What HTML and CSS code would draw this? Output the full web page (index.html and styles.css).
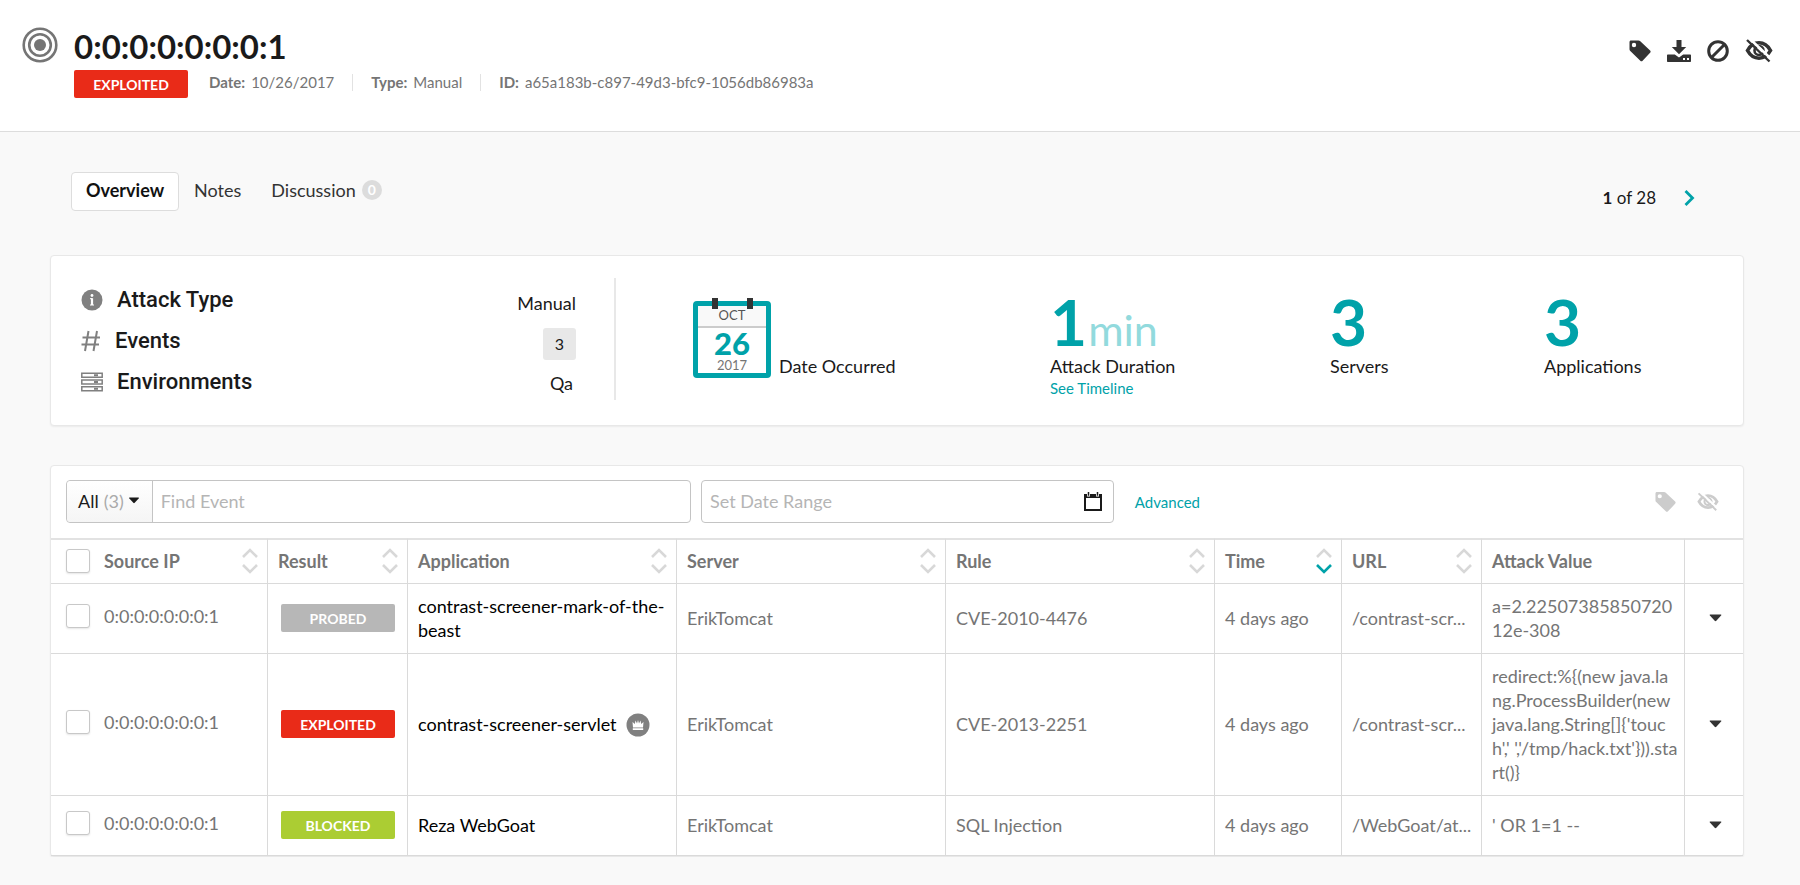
FILE: index.html
```html
<!DOCTYPE html>
<html lang="en">
<head>
<meta charset="utf-8">
<title>Attack 0:0:0:0:0:0:0:1</title>
<link rel="stylesheet" href="styles.css">
</head>
<body>
<svg class="defs" aria-hidden="true">
  <symbol id="tag" viewBox="0 0 22 22"><path fill="currentColor" fill-rule="evenodd" d="M2 .5h7.500c.7 0 1.300.3 1.800.8l9.800 9.200c.7.700.7 1.600 0 2.300l-7.500 8c-.7.700-1.600.700-2.300 0L1.300 11c-.5-.5-.8-1-.8-1.700V2C.5 1.100 1.100.5 2 .5zM5 2.800a2.200 2.200 0 1 0 0 4.400 2.200 2.200 0 0 0 0-4.400z"/></symbol>
  <symbol id="eye-off" viewBox="0 0 28 24">
    <path fill="none" stroke="currentColor" stroke-width="3.600" d="M2.500 11.500C5.500 6 9.500 3.800 14 3.800s8.500 2.200 11.500 7.700C22.500 17 18.500 19.200 14 19.200S5.500 17 2.500 11.500z"/>
    <circle cx="14" cy="11.500" r="4.500" fill="none" stroke="currentColor" stroke-width="2.600"/>
    <path class="eye-gap" stroke-width="2.600" d="M4.500-.5 27 20.800"/>
    <path stroke="currentColor" stroke-width="2.400" d="M2 1 24.500 22.500"/>
  </symbol>
  <symbol id="sort-up" viewBox="0 0 16 10"><path fill="none" stroke="currentColor" stroke-width="2.600" d="M1 9 8 2l7 7"/></symbol>
  <symbol id="sort-down" viewBox="0 0 16 10"><path fill="none" stroke="currentColor" stroke-width="2.600" d="M1 1l7 7 7-7"/></symbol>
  <symbol id="caret" viewBox="0 0 12 8"><path fill="currentColor" d="M.8.5h10.400c.6 0 .8.5.4 1L6.800 6.800c-.5.500-1.100.500-1.600 0L.4 1.500C0 1 .2.5.8.5z"/></symbol>
</svg>

<header class="page-head">
  <svg class="target" viewBox="0 0 36 36" aria-hidden="true"><g fill="none" stroke="currentColor"><circle cx="18" cy="18" r="16.300" stroke-width="2.600"/><circle cx="18" cy="18" r="10.800" stroke-width="2.600"/></g><circle cx="18" cy="18" r="6" fill="currentColor"/></svg>
  <div class="head-main">
    <h1>0:0:0:0:0:0:0:1</h1>
    <div class="meta">
      <span class="badge exploited">EXPLOITED</span>
      <dl>
        <div><dt>Date:</dt><dd>10/26/2017</dd></div>
        <div><dt>Type:</dt><dd>Manual</dd></div>
        <div><dt>ID:</dt><dd>a65a183b-c897-49d3-bfc9-1056db86983a</dd></div>
      </dl>
    </div>
  </div>
  <div class="head-actions">
    <button type="button" aria-label="Tag"><svg width="22" height="22"><use href="#tag"/></svg></button>
    <button type="button" aria-label="Export"><svg width="24" height="22" viewBox="0 0 24 22"><path fill="currentColor" d="M9.500 0h5v7h4.700L12 14.300 4.800 7h4.700z"/><path fill="currentColor" fill-rule="evenodd" d="M1 14.500h6.800l4.200 3 4.200-3H23c.6 0 1 .4 1 1V21c0 .6-.4 1-1 1H1c-.6 0-1-.4-1-1v-5.500c0-.6.400-1 1-1zM16 18v2h2v-2zm4 0v2h2v-2z"/></svg></button>
    <button type="button" aria-label="Suppress"><svg width="22" height="22" viewBox="0 0 22 22"><g fill="none" stroke="currentColor" stroke-width="3"><circle cx="11" cy="11" r="9.300"/><path d="M4.500 17.500l13-13"/></g></svg></button>
    <button type="button" aria-label="Hide"><svg width="28" height="24"><use href="#eye-off"/></svg></button>
  </div>
</header>

<main>
  <div class="tab-row">
    <nav class="tabs">
      <a class="active" href="#overview">Overview</a>
      <a href="#notes">Notes</a>
      <a href="#discussion">Discussion <span class="count">0</span></a>
    </nav>
    <div class="pager">
      <span><b>1</b> of 28</span>
      <button type="button" aria-label="Next"><svg width="12" height="16" viewBox="0 0 12 16"><path fill="none" stroke="currentColor" stroke-width="2.800" d="M1.500 1l7 7-7 7"/></svg></button>
    </div>
  </div>

  <section class="card summary">
    <div class="facts">
      <div class="fact">
        <svg width="22" height="22" viewBox="0 0 22 22"><circle cx="11" cy="11" r="10.500" fill="currentColor"/><circle cx="11" cy="6.500" r="1.400" fill="#fff"/><path stroke="#fff" stroke-width="2.200" d="M11 9.200V16"/><path stroke="#fff" d="M9 9.700h2M9 16h4"/></svg>
        <span class="name">Attack Type</span><span class="value">Manual</span>
      </div>
      <div class="fact">
        <svg width="20" height="22" viewBox="0 0 20 22"><path fill="none" stroke="currentColor" stroke-width="2" d="M7.500 1 4 21M16 1l-3.500 20M1.500 7.500H19M.5 14.500H18"/></svg>
        <span class="name">Events</span><span class="value pill">3</span>
      </div>
      <div class="fact">
        <svg width="22" height="20" viewBox="0 0 22 20"><g fill="none" stroke="currentColor" stroke-width="1.500"><path d="M.8 1.200h20.400v4H.8zM.8 8h20.400v4H.8zM.8 14.800h20.400v4H.8z"/></g><path stroke="currentColor" stroke-width="2" d="M13 3.200h4M13 10h4M13 16.800h4"/></svg>
        <span class="name">Environments</span><span class="value qa">Qa</span>
      </div>
    </div>
    <div class="stats">
      <div class="stat date">
        <div class="calendar"><span class="month">OCT</span><span class="day">26</span><span class="year">2017</span></div>
        <span>Date Occurred</span>
      </div>
      <div class="stat"><div class="figure">1<small>min</small></div><span>Attack Duration</span><a href="#timeline">See Timeline</a></div>
      <div class="stat"><div class="figure">3</div><span>Servers</span></div>
      <div class="stat"><div class="figure">3</div><span>Applications</span></div>
    </div>
  </section>

  <section class="card events">
    <div class="toolbar">
      <div class="search">
        <button type="button">All <span>(3)</span> <svg width="10" height="7"><use href="#caret"/></svg></button>
        <input type="text" placeholder="Find Event" aria-label="Find Event">
      </div>
      <label class="range">
        <input type="text" placeholder="Set Date Range" aria-label="Set Date Range">
        <svg width="18" height="19" viewBox="0 0 18 19"><path fill="none" stroke="currentColor" stroke-width="2" d="M1 3h16v15H1z"/><path fill="currentColor" d="M0 2h18v4H0z"/><path stroke="#fff" stroke-width="3" d="M4.500 0v4.500M13.500 0v4.500"/><path stroke="currentColor" stroke-width="1.500" d="M4.500 0v3.800M13.500 0v3.800"/></svg>
      </label>
      <a href="#advanced">Advanced</a>
      <div class="tools">
        <button type="button" aria-label="Tag selected"><svg width="21" height="22"><use href="#tag"/></svg></button>
        <button type="button" aria-label="Hide selected"><svg width="22" height="20"><use href="#eye-off"/></svg></button>
      </div>
    </div>
    <table>
      <colgroup><col class="c-ip"><col class="c-result"><col><col><col><col class="c-time"><col class="c-url"><col class="c-value"><col class="c-menu"></colgroup>
      <thead>
        <tr>
          <th><div class="th"><label class="pick"><input type="checkbox">Source IP</label><button type="button" class="sort" aria-label="Sort"><svg><use href="#sort-up"/></svg><svg><use href="#sort-down"/></svg></button></div></th>
          <th><div class="th">Result<button type="button" class="sort" aria-label="Sort"><svg><use href="#sort-up"/></svg><svg><use href="#sort-down"/></svg></button></div></th>
          <th><div class="th">Application<button type="button" class="sort" aria-label="Sort"><svg><use href="#sort-up"/></svg><svg><use href="#sort-down"/></svg></button></div></th>
          <th><div class="th">Server<button type="button" class="sort" aria-label="Sort"><svg><use href="#sort-up"/></svg><svg><use href="#sort-down"/></svg></button></div></th>
          <th><div class="th">Rule<button type="button" class="sort" aria-label="Sort"><svg><use href="#sort-up"/></svg><svg><use href="#sort-down"/></svg></button></div></th>
          <th><div class="th">Time<button type="button" class="sort" aria-label="Sort"><svg><use href="#sort-up"/></svg><svg class="on"><use href="#sort-down"/></svg></button></div></th>
          <th><div class="th">URL<button type="button" class="sort" aria-label="Sort"><svg><use href="#sort-up"/></svg><svg><use href="#sort-down"/></svg></button></div></th>
          <th><div class="th">Attack Value</div></th>
          <th></th>
        </tr>
      </thead>
      <tbody>
        <tr>
          <td><label class="pick"><input type="checkbox">0:0:0:0:0:0:0:1</label></td>
          <td class="result"><span class="badge probed">PROBED</span></td>
          <td class="app">contrast-screener-mark-of-the-beast</td>
          <td>ErikTomcat</td><td>CVE-2010-4476</td><td>4 days ago</td>
          <td class="url">/contrast-scr...</td>
          <td class="attack">a=2.22507385850720<br>12e-308</td>
          <td class="menu"><button type="button" aria-label="Actions"><svg width="13" height="8"><use href="#caret"/></svg></button></td>
        </tr>
        <tr>
          <td><label class="pick"><input type="checkbox">0:0:0:0:0:0:0:1</label></td>
          <td class="result"><span class="badge exploited">EXPLOITED</span></td>
          <td class="app">contrast-screener-servlet <svg class="crown" width="24" height="24" viewBox="0 0 24 24"><circle cx="12" cy="12" r="11.500" fill="#808080"/><path fill="#fff" d="M7 14.500 6.500 9l2.300 2 .7-3.500 1.500 3 1-3.500 1 3.500 1.500-3 .7 3.500 2.300-2-.5 5.500zM6.800 15.300h10.400v1.700H6.800z"/></svg></td>
          <td>ErikTomcat</td><td>CVE-2013-2251</td><td>4 days ago</td>
          <td class="url">/contrast-scr...</td>
          <td class="attack">redirect:%{(new java.la<br>ng.ProcessBuilder(new<br>java.lang.String[]{'touc<br>h',' ','/tmp/hack.txt'})).sta<br>rt()}</td>
          <td class="menu"><button type="button" aria-label="Actions"><svg width="13" height="8"><use href="#caret"/></svg></button></td>
        </tr>
        <tr>
          <td><label class="pick"><input type="checkbox">0:0:0:0:0:0:0:1</label></td>
          <td class="result"><span class="badge blocked">BLOCKED</span></td>
          <td class="app">Reza WebGoat</td>
          <td>ErikTomcat</td><td>SQL Injection</td><td>4 days ago</td>
          <td class="url">/WebGoat/at...</td>
          <td class="attack">' OR 1=1 --</td>
          <td class="menu"><button type="button" aria-label="Actions"><svg width="13" height="8"><use href="#caret"/></svg></button></td>
        </tr>
      </tbody>
    </table>
  </section>
</main>
</body>
</html>
```
FILE: styles.css
```css
*, ::before { box-sizing: border-box; }
body { margin: 0; background: #f9f9f9; color: #1a1a1a; font: 18px/24px Lato, sans-serif; }
button { padding: 0; border: 0; background: none; color: inherit; font: inherit; }
a { color: #00a2a9; text-decoration: none; }
svg { display: block; flex: none; }
.defs { position: absolute; width: 0; height: 0; }
h1, dl, dd { margin: 0; }

.page-head { display: flex; align-items: flex-start; padding: 26px 27px 33px 22px; background: #fff; border-bottom: 1px solid #ddd; }
.target { width: 36px; height: 36px; margin-top: 1px; color: #757575; }
.head-main { flex: 1; padding-left: 16px; }
h1 { font-size: 33px; line-height: 40px; }
.meta { display: flex; gap: 21px; margin-top: 4px; }
.meta dl { display: flex; color: #757575; font-size: 15px; line-height: 24px; align-items: flex-start; }
.meta dl div { display: flex; align-items: center; gap: 6px; }
.meta dl div + div::before { content: ""; width: 1px; height: 17px; margin: 0 12px 0 18px; background: #e2e2e2; }
dt { font-weight: 700; }
.badge { display: block; width: 114px; height: 28px; padding-top: 2px; border-radius: 2px; color: #fff; font-size: 14px; font-weight: 700; line-height: 26px; text-align: center; }
.exploited { background: #e92b18; }
.probed { background: #b7b7b7; }
.blocked { background: #abcd33; }
.head-actions { display: flex; align-items: center; gap: 16px; padding-top: 13px; color: #333; }
.eye-gap { stroke: #fff; }

.tab-row { display: flex; justify-content: space-between; padding: 40px 104px 0 71px; }
.tabs { display: flex; }
.tabs a { display: flex; align-items: center; gap: 6px; height: 39px; padding: 0 14px 3px; border: 1px solid transparent; color: #333; }
.tabs .active { border-color: #ddd; border-radius: 4px; background: #fff; color: #111; font-weight: 700; }
.count { width: 20px; height: 20px; border-radius: 10px; background: #dcdcdc; color: #fff; font-size: 14px; font-weight: 700; line-height: 20px; text-align: center; }
.pager { display: flex; align-items: center; gap: 28px; padding-top: 12px; font-size: 17px; }
.pager button { color: #00a2a9; }

.card { margin: 0 56px 0 50px; border: 1px solid #e8e8e8; border-radius: 4px; background: #fff; box-shadow: 0 1px 2px #0000000f; }
.summary { display: flex; align-items: center; margin-top: 44px; padding: 22px 0 25px; }
.facts { display: grid; align-content: start; width: 565px; height: 122px; padding: 1px 38px 0 30px; border-right: 2px solid #e8e8e8; }
.fact { display: flex; align-items: center; gap: 14px; height: 41px; color: #808080; }
.name { flex: 1; color: #1a1a1a; font: 500 22px/26px Roboto, sans-serif; }
.value { margin-top: 6px; color: #1a1a1a; }
.pill { padding: 4px 12px; border-radius: 3px; background: #e8e8e8; font-size: 16px; }
.qa { margin-top: 2px; padding-right: 3px; }
.stats { flex: 1; display: grid; grid-template-columns: 357fr 280fr 214fr 199fr; height: 122px; padding: 16px 0 0 77px; }
.stat { display: flex; flex-direction: column; align-items: flex-start; }
.stat a { font-size: 15px; line-height: 20px; }
.figure { height: 60px; color: #00a2a9; font-size: 64px; font-weight: 700; line-height: 56px; }
.figure small { margin-left: 1px; color: #92dadd; font-size: 43px; font-weight: 400; line-height: 1; }
.date { flex-direction: row; align-items: flex-end; align-self: start; gap: 8px; padding-top: 7px; }
.calendar { display: flex; flex-direction: column; position: relative; width: 78px; height: 77px; border: 5px solid #00a2a9; border-radius: 4px; text-align: center; }
.calendar::before { content: ""; position: absolute; top: -8px; left: 14px; width: 41px; height: 11px; border: solid #333; border-width: 0 6px; }
.month { height: 22px; border-bottom: 2px solid #ccc; background: #f9f9f9; color: #555; font-size: 13px; line-height: 19px; }
.day { color: #00a2a9; font-size: 31px; font-weight: 900; line-height: 30px; }
.year { color: #757575; font-size: 13px; line-height: 14px; }

.events { margin-top: 39px; }
.toolbar { display: flex; align-items: center; padding: 14px 24px 15px 15px; }
.search { display: flex; flex: 625; height: 43px; border: 1px solid #c4c4c4; border-radius: 4px; }
.search button { display: flex; align-items: center; gap: 5px; padding: 0 13px 2px 11px; border-right: 1px solid #c4c4c4; border-radius: 4px 0 0 4px; background: linear-gradient(#fff, #f5f5f5); }
.search button span { color: #aaa; }
.toolbar input { flex: 1; min-width: 0; height: 41px; padding: 0 8px 2px; border: 0; background: none; font: inherit; }
.toolbar input::placeholder { color: #b5b5b5; opacity: 1; }
.range { display: flex; flex: 401; align-items: center; height: 43px; margin: 0 21px 0 10px; padding-right: 11px; border: 1px solid #c4c4c4; border-radius: 4px; }
.toolbar a { font-size: 15px; }
.tools { display: flex; align-items: center; justify-content: flex-end; gap: 21px; width: 519px; color: #ccc; }

table { width: 100%; border-collapse: separate; border-spacing: 0; table-layout: fixed; color: #757575; }
.c-ip { width: 217px; } .c-result { width: 140px; } .c-time { width: 127px; } .c-url { width: 140px; } .c-value { width: 203px; } .c-menu { width: 58px; }
th, td { padding: 0 9px 2px 10px; border: solid #dadada; border-width: 0 1px 1px 0; text-align: left; }
th:last-child, td:last-child { border-right: 0; }
th { height: 46px; border-top: 2px solid #e2e2e2; }
.th { display: flex; align-items: center; justify-content: space-between; }
td { height: 60px; padding: 10px 7px 11px 10px; }
th:first-child, td:first-child { padding-left: 15px; }
td:first-child { padding-bottom: 16px; }
.pick { display: flex; align-items: center; gap: 14px; }
.pick input { appearance: none; flex: none; width: 24px; height: 24px; margin: 0; border: 1px solid #c8c8c8; border-radius: 3px; background: #fff; box-shadow: 0 1px 2px #0000001a; }
.sort { display: grid; gap: 6px; color: #d8d8d8; }
.sort svg { width: 16px; height: 10px; }
.sort .on { color: #00a2a9; }
.result { padding-left: 13px; }
.app { color: #000; }
.crown { display: inline-block; margin-left: 5px; vertical-align: -6px; }
.url, .attack { white-space: nowrap; }
.menu button { display: grid; width: 100%; justify-content: center; color: #333; }
```
